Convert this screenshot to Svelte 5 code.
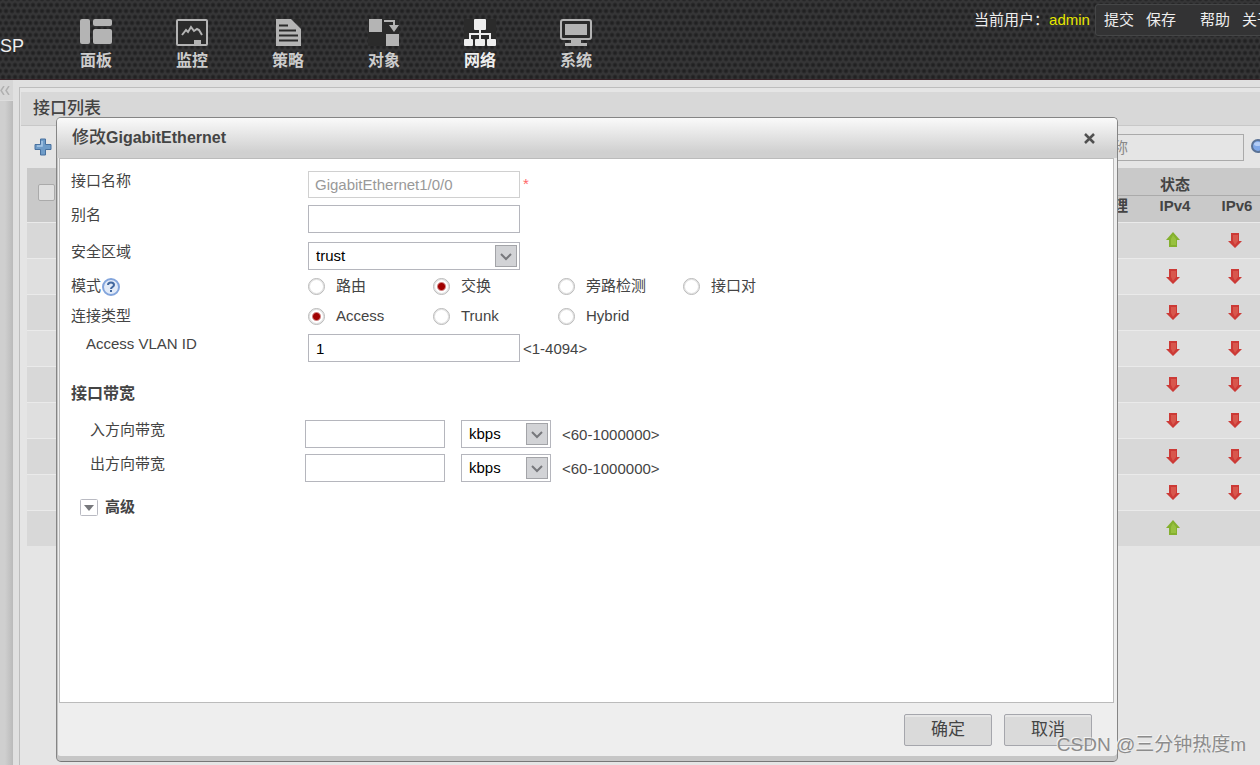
<script>
    let nav = ['面板', '监控', '策略', '对象', '网络', '系统'];
    let active = '网络';
    let rows = [
        ['up', 'down'],
        ['down', 'down'],
        ['down', 'down'],
        ['down', 'down'],
        ['down', 'down'],
        ['down', 'down'],
        ['down', 'down'],
        ['down', 'down'],
        ['up', null]
    ];
    let modes = ['路由', '交换', '旁路检测', '接口对'];
    let link_types = ['Access', 'Trunk', 'Hybrid'];
    let bandwidth = [
        { id: 'in', label: '入方向带宽', value: '', unit: 'kbps' },
        { id: 'out', label: '出方向带宽', value: '', unit: 'kbps' }
    ];

    let mode = '交换';
    let link_type = 'Access';
    let name = 'GigabitEthernet1/0/0';
    let alias = '';
    let zone = 'trust';
    let vlan = '1';
    let show_dialog = true;

    function close_dialog() {
        show_dialog = false;
    }
</script>

<div class="window">
    <div class="page">
        <header>
            <div class="brand">SP</div>
            <nav>
                {#each nav as item}
                    <button class="nav_item" class:active={item === active} on:click={() => (active = item)}>
                        <svg width="32" height="27" viewBox="0 0 32 27" fill="currentColor">
                            {#if item === '面板'}
                                <rect x="0" y="0" width="10" height="25" rx="2" />
                                <rect x="13" y="0" width="19" height="7" rx="2" />
                                <rect x="13" y="10" width="19" height="15" rx="2" />
                            {:else if item === '监控'}
                                <rect x="1" y="1" width="30" height="25" rx="1" fill="#2b2b2b" stroke="currentColor" stroke-width="2" />
                                <path d="M6 16 L10 11 L12 13 L15 8 L18 12 L21 10 L23 11 L26 16" fill="none" stroke="currentColor" stroke-width="2" />
                                <rect x="18" y="21" width="7" height="4" />
                            {:else if item === '策略'}
                                <path d="M4 0 H19 L29 10 V27 H4 Z" />
                                <path d="M21 0 H29 V8 Z" fill="#2b2b2b" />
                                <path d="M7 6.500 H16 M7 11.500 H24 M7 16.500 H26 M7 21.500 H26" stroke="#2b2b2b" stroke-width="2" />
                            {:else if item === '对象'}
                                <rect width="31" height="27" fill="#2b2b2b" />
                                <rect x="1" y="0" width="13" height="13" />
                                <rect x="18" y="15" width="13" height="12" />
                                <path d="M16 1 H27 V6 H31 L26 13 L21 6 H25 V3 H16 Z" />
                            {:else if item === '网络'}
                                <rect width="32" height="27" fill="#2b2b2b" />
                                <rect x="10" y="0" width="12" height="11" rx="1" />
                                <path d="M16 10 V21 M6 21 V15 H26 V21" fill="none" stroke="currentColor" stroke-width="2" />
                                <rect x="0" y="20" width="9" height="7" rx="1" />
                                <rect x="11" y="20" width="10" height="7" rx="1" />
                                <rect x="23" y="20" width="9" height="7" rx="1" />
                            {:else}
                                <rect x="1" y="1" width="30" height="19" rx="2" fill="#2b2b2b" stroke="currentColor" stroke-width="2" />
                                <rect x="5" y="5" width="22" height="11" />
                                <path d="M11 20 H21 V24 H27 V27 H5 V24 H11 Z" />
                            {/if}
                        </svg>
                        <span>{item}</span>
                    </button>
                {/each}
            </nav>
            <div class="account">
                <span class="user">当前用户：<b>admin</b></span>
                <div class="links">
                    <a href="#commit">提交</a>
                    <a href="#save">保存</a>
                    <a href="#help" class="apart">帮助</a>
                    <a href="#about">关于</a>
                </div>
            </div>
        </header>

        <div class="body">
            <aside>
                <button class="collapse" aria-label="收起">
                    <svg width="10" height="9" viewBox="0 0 10 9" fill="none" stroke="#b0b0b0" stroke-width="1.500">
                        <path d="M4 0 L1 4.500 L4 9 M9 0 L6 4.500 L9 9" />
                    </svg>
                </button>
            </aside>
            <main>
                <h1>接口列表</h1>
                <div class="toolbar">
                    <button class="icon_button" aria-label="新建">
                        <svg width="18" height="18" viewBox="0 0 18 18">
                            <path d="M6.500 1 H11.500 V6.500 H17 V11.500 H11.500 V17 H6.500 V11.500 H1 V6.500 H6.500 Z" fill="#6f9cc8" stroke="#48719f" stroke-linejoin="round" />
                            <path d="M8 3 V8 H3" fill="none" stroke="#a9c8e6" stroke-width="1.500" />
                        </svg>
                    </button>
                    <div class="search">
                        <input type="text" placeholder="接口名称" aria-label="接口名称" />
                        <button class="icon_button" aria-label="查询">
                            <svg width="18" height="18" viewBox="0 0 18 18">
                                <path d="M12 12 L16 16" stroke="#8a6d4a" stroke-width="3" />
                                <circle cx="8" cy="8" r="6" fill="#7fa8e8" stroke="#5b7396" stroke-width="2" />
                                <ellipse cx="8" cy="6" rx="4" ry="2" fill="#b4cdf5" />
                            </svg>
                        </button>
                    </div>
                </div>
                <table>
                    <colgroup>
                        <col class="col_check" />
                        <col />
                        <col class="col_state" />
                        <col class="col_state" />
                        <col class="col_state" />
                    </colgroup>
                    <thead>
                        <tr>
                            <th rowspan="2" class="check"><input type="checkbox" aria-label="全选" /></th>
                            <th rowspan="2"></th>
                            <th colspan="3" class="group">状态</th>
                        </tr>
                        <tr class="sub">
                            <th>物理</th>
                            <th>IPv4</th>
                            <th>IPv6</th>
                        </tr>
                    </thead>
                    <tbody>
                        {#each rows as row}
                            <tr>
                                <td></td>
                                <td></td>
                                <td></td>
                                {#each row as state}
                                    <td class="state">
                                        {#if state === 'up'}
                                            <svg width="14" height="16" viewBox="0 0 14 16">
                                                <path d="M7 0 L14 8 H11 V15 H3 V8 H0 Z" fill="#84b02e" />
                                                <path d="M7 3 L10 7 V13 H5 V7 Z" fill="#98c13f" />
                                            </svg>
                                        {:else if state === 'down'}
                                            <svg width="14" height="16" viewBox="0 0 14 16">
                                                <path d="M7 16 L14 9 H11 V1 H3 V9 H0 Z" fill="#cc3a36" />
                                                <path d="M7 13 L10 9 V3 H5 V9 Z" fill="#d8574d" />
                                            </svg>
                                        {/if}
                                    </td>
                                {/each}
                            </tr>
                        {/each}
                    </tbody>
                </table>
            </main>
        </div>
    </div>

    {#if show_dialog}
        <div class="dialog" role="dialog" aria-labelledby="dialog_title">
            <div class="dialog_title">
                <h2 id="dialog_title"><span>修改</span>GigabitEthernet</h2>
                <button class="close" aria-label="关闭" on:click={close_dialog}>
                    <svg width="11" height="11" viewBox="0 0 11 11">
                        <path d="M1 1 L10 10 M10 1 L1 10" stroke="#505050" stroke-width="2.500" />
                    </svg>
                </button>
            </div>
            <form on:submit|preventDefault={close_dialog}>
                <div class="content">
                    <div class="row">
                        <label for="name">接口名称</label>
                        <input id="name" type="text" disabled value={name} />
                        <span class="required">*</span>
                    </div>
                    <div class="row wide">
                        <label for="alias">别名</label>
                        <input id="alias" type="text" bind:value={alias} />
                    </div>
                    <div class="row tight">
                        <label for="zone">安全区域</label>
                        <div class="select">
                            <select id="zone" bind:value={zone}>
                                <option>trust</option>
                                <option>untrust</option>
                                <option>dmz</option>
                            </select>
                            <svg width="22" height="22" viewBox="0 0 22 22">
                                <rect x="0.500" y="0.500" width="21" height="21" fill="#d2d3d6" stroke="#a3a4a8" />
                                <path d="M6 9 L11 14 L16 9" fill="none" stroke="#77787c" stroke-width="2" />
                            </svg>
                        </div>
                    </div>
                    <fieldset class="radios">
                        <legend>模式
                            <svg class="help" width="18" height="18" viewBox="0 0 18 18">
                                <circle cx="9" cy="9" r="8" fill="#e2ebf8" stroke="#83a5dc" stroke-width="2" />
                                <path d="M6 7 C6 3.500 12 3.500 12 7 C12 9 9 9 9 11" fill="none" stroke="#42689f" stroke-width="2" />
                                <rect x="8" y="12" width="2" height="2" fill="#42689f" />
                            </svg>
                        </legend>
                        {#each modes as item}
                            <label><input type="radio" name="mode" value={item} bind:group={mode} />{item}</label>
                        {/each}
                    </fieldset>
                    <fieldset class="radios last">
                        <legend>连接类型</legend>
                        {#each link_types as item}
                            <label><input type="radio" name="link_type" value={item} bind:group={link_type} />{item}</label>
                        {/each}
                    </fieldset>
                    <div class="row">
                        <label for="vlan" class="indent">Access VLAN ID</label>
                        <input id="vlan" type="text" bind:value={vlan} />
                        <span class="range">&lt;1-4094&gt;</span>
                    </div>

                    <h3>接口带宽</h3>
                    {#each bandwidth as item}
                        <div class="row bandwidth">
                            <label for={item.id} class="indent">{item.label}</label>
                            <input id={item.id} type="text" bind:value={item.value} />
                            <div class="select">
                                <select aria-label="单位" bind:value={item.unit}>
                                    <option>kbps</option>
                                    <option>mbps</option>
                                </select>
                                <svg width="22" height="22" viewBox="0 0 22 22">
                                    <rect x="0.500" y="0.500" width="21" height="21" fill="#d2d3d6" stroke="#a3a4a8" />
                                    <path d="M6 9 L11 14 L16 9" fill="none" stroke="#77787c" stroke-width="2" />
                                </svg>
                            </div>
                            <span class="range">&lt;60-1000000&gt;</span>
                        </div>
                    {/each}

                    <button type="button" class="advanced">
                        <svg width="18" height="17" viewBox="0 0 18 17">
                            <rect x="0.500" y="0.500" width="17" height="16" rx="1" fill="#fff" stroke="#b9bac2" />
                            <path d="M4 6 H14 L9 12 Z" fill="#77787c" />
                        </svg>
                        高级
                    </button>
                </div>
                <div class="footer">
                    <button type="submit">确定</button>
                    <button type="button" on:click={close_dialog}>取消</button>
                </div>
            </form>
        </div>
    {/if}

    <div class="watermark">CSDN @三分钟热度m</div>
</div>

<style>
    :global(body) {
        background: #e5e5e5;
    }
    .window {
        position: relative;
        display: flex;
        min-height: 100vh;
        overflow: hidden;
        font-family: "Liberation Sans", "Noto Sans CJK SC", sans-serif;
        font-size: 15px;
        line-height: 20px;
        color: #444;
    }
    .window * {
        box-sizing: border-box;
    }
    button, input, select {
        font: inherit;
        color: inherit;
        margin: 0;
    }
    button {
        padding: 0;
        border: none;
        background: none;
        cursor: pointer;
    }
    svg {
        display: block;
    }
    /* the page runs a little past the right edge of the window */
    .page {
        flex: 0 0 calc(100% + 16px);
        display: flex;
        flex-direction: column;
    }

    header {
        display: flex;
        height: 80px;
        border-bottom: 1px solid #3a2328;
        background-color: #363637;
        background-image:
            radial-gradient(circle at 3px 3px, #212122 1px, transparent 3px),
            radial-gradient(circle at 3px 3px, #212122 1px, transparent 3px);
        background-size: 6px 12px;
        background-position: 0 2px, 3px 8px;
    }
    .brand {
        width: 48px;
        padding-top: 36px;
        font-size: 18px;
        color: #eee;
    }
    nav {
        display: flex;
    }
    .nav_item {
        width: 96px;
        display: flex;
        flex-direction: column;
        align-items: center;
        padding-top: 19px;
        gap: 5px;
        font-size: 16px;
        font-weight: bold;
        color: #b4b4b4;
    }
    .nav_item span {
        color: #ccc;
    }
    .nav_item.active, .nav_item.active span {
        color: #eee;
    }
    .account {
        margin-left: auto;
        padding: 4px 0;
        display: flex;
        align-items: flex-start;
        white-space: nowrap;
        color: #eee;
    }
    .user {
        padding: 6px 5px 0 0;
    }
    .user b {
        font-weight: normal;
        color: #e6e600;
    }
    .links {
        display: flex;
        gap: 12px;
        height: 32px;
        padding: 5px 3px 0 8px;
        background: #333334;
        border: 1px solid #454647;
        border-radius: 3px;
    }
    .links a {
        color: #eee;
        text-decoration: none;
    }
    .links .apart {
        margin-left: 12px;
    }

    .body {
        flex: 1;
        display: flex;
        background: #e0e0e0;
    }
    aside {
        width: 13px;
        flex-shrink: 0;
        background: linear-gradient(to right, #cfcfcf 5px, #bababa);
    }
    .collapse {
        width: 13px;
        height: 21px;
        display: flex;
        align-items: center;
        background: #d6d6d6;
        border-bottom: 1px solid #ddd;
    }
    main {
        flex: 1;
        min-width: 0;
        margin: 7px 0 0 6px;
        padding: 4px 8px 0 1px;
        border: 1px solid #bdbdbd;
        border-width: 1px 0 0 1px;
        background: #e5e5e5;
    }
    h1 {
        margin: 0 -8px 0 0;
        padding: 7px 12px 6px;
        font-size: 17px;
        line-height: 20px;
        font-weight: 500;
        background: #d8d8d8;
        border-bottom: 1px solid #c8c8c8;
    }
    .toolbar {
        height: 42px;
        display: flex;
        align-items: center;
        justify-content: space-between;
        padding-left: 13px;
    }
    .search {
        display: flex;
        align-items: center;
        gap: 6px;
    }
    .search input {
        width: 184px;
        height: 27px;
        padding: 0 7px;
        border: 1px solid #aaa;
        background: #e5e5e5;
    }
    .search input::placeholder {
        color: #888;
    }
    table {
        width: calc(100% - 6px);
        margin-left: 6px;
        table-layout: fixed;
        border-collapse: collapse;
    }
    .col_check {
        width: 38px;
    }
    .col_state {
        width: 62px;
    }
    th {
        height: 27px;
        padding: 0;
        background: #c9c9c9;
        vertical-align: bottom;
    }
    .group {
        border-bottom: 1px solid #aaa;
    }
    .sub th {
        vertical-align: top;
    }
    .check {
        padding-bottom: 6px;
        vertical-align: middle;
    }
    input[type="checkbox"] {
        appearance: none;
        width: 17px;
        height: 17px;
        border: 1px solid #aaa;
        border-radius: 2px;
        background: #e0e0e0;
        vertical-align: middle;
    }
    td {
        height: 36px;
        padding: 0;
        border-top: 1px solid #eaeaea;
        background: #dfdfdf;
    }
    tr:nth-child(odd) td {
        background: #d8d8d8;
    }
    .state {
        padding-right: 4px;
    }
    .state svg {
        margin: 0 auto;
    }

    .dialog {
        position: absolute;
        top: 117px;
        left: 56px;
        right: 142px;
        border: 1px solid #858585;
        border-bottom-color: #777;
        border-radius: 5px;
        background: #eee;
        box-shadow: inset 0 -5px #c6c6c6, inset 1px 0 #c4c4c4;
    }
    .dialog_title {
        height: 40px;
        display: flex;
        align-items: center;
        justify-content: space-between;
        padding: 0 22px 0 15px;
        border-radius: 4px 4px 0 0;
        background: linear-gradient(#fafafa, #d0d0d0 85%);
    }
    h2 {
        margin: 0;
        font-size: 16px;
        line-height: 20px;
    }
    h2 span {
        font-size: 17px;
        font-weight: 500;
    }
    .content {
        min-height: 545px;
        margin: 0 3px 0 2px;
        padding: 12px 11px;
        border: 1px solid #bbb;
        background: #fff;
    }
    .row {
        display: grid;
        grid-template-columns: 237px 212px auto;
        justify-content: start;
        min-height: 28px;
        margin-bottom: 6px;
    }
    .row.wide {
        margin-bottom: 9px;
    }
    .row.tight {
        margin-bottom: 1px;
    }
    .row.bandwidth {
        grid-template-columns: 234px 140px 90px auto;
    }
    .bandwidth .indent {
        padding-left: 19px;
    }
    .bandwidth .select {
        margin-left: 16px;
        width: 90px;
    }
    .bandwidth .range {
        padding-left: 27px;
    }
    .indent {
        padding-left: 15px;
    }
    .content input[type="text"], select {
        width: 100%;
        height: 28px;
        padding: 0 7px;
        border: 1px solid #b5b6bd;
        border-radius: 0;
        background: #fff;
        color: #000;
    }
    .content input:disabled {
        height: 27px;
        padding: 0 6px;
        border-color: #d0d0d0;
        color: #999;
    }
    select {
        appearance: none;
    }
    .select {
        display: grid;
        align-items: center;
    }
    .select select, .select svg {
        grid-area: 1 / 1;
    }
    .select svg {
        justify-self: end;
        margin-right: 3px;
        pointer-events: none;
    }
    .required {
        padding: 3px 3px 0;
        color: #f66;
    }
    .range {
        padding: 5px 0 0 3px;
    }
    .radios {
        display: flex;
        align-items: center;
        height: 30px;
        margin: 0;
        padding: 0;
        border: none;
    }
    .radios.last {
        margin-bottom: 3px;
    }
    legend {
        float: left;
        width: 237px;
        padding: 0;
        display: flex;
        align-items: center;
        gap: 1px;
    }
    .help {
        margin-top: 2px;
    }
    .radios label {
        width: 125px;
        display: flex;
        align-items: center;
        gap: 11px;
    }
    input[type="radio"] {
        appearance: none;
        width: 17px;
        height: 17px;
        border: 1px solid #b8b8b8;
        border-radius: 50%;
        background: #fff;
        box-shadow: inset 0 0 0 1px #e2e2e2;
    }
    input[type="radio"]:checked {
        background: radial-gradient(circle, #a00000 3px, #fff 5px);
    }
    h3 {
        margin: 22px 0 16px;
        font-size: 16px;
        line-height: 20px;
    }
    .advanced {
        display: flex;
        align-items: center;
        gap: 7px;
        margin: 15px 0 0 9px;
        font-weight: bold;
    }
    .footer {
        display: flex;
        justify-content: flex-end;
        gap: 12px;
        padding: 11px 25px 15px;
    }
    .footer button {
        width: 88px;
        height: 32px;
        font-size: 17px;
        border: 1px solid #a5a6ac;
        border-radius: 2px;
        background: #dadada;
        box-shadow: inset 0 2px #e6e6e6;
    }

    .watermark {
        position: absolute;
        right: 14px;
        bottom: 10px;
        font-size: 19px;
        color: #8c8c8c;
        text-shadow: -1px -1px #f4f4f4;
    }
</style>
